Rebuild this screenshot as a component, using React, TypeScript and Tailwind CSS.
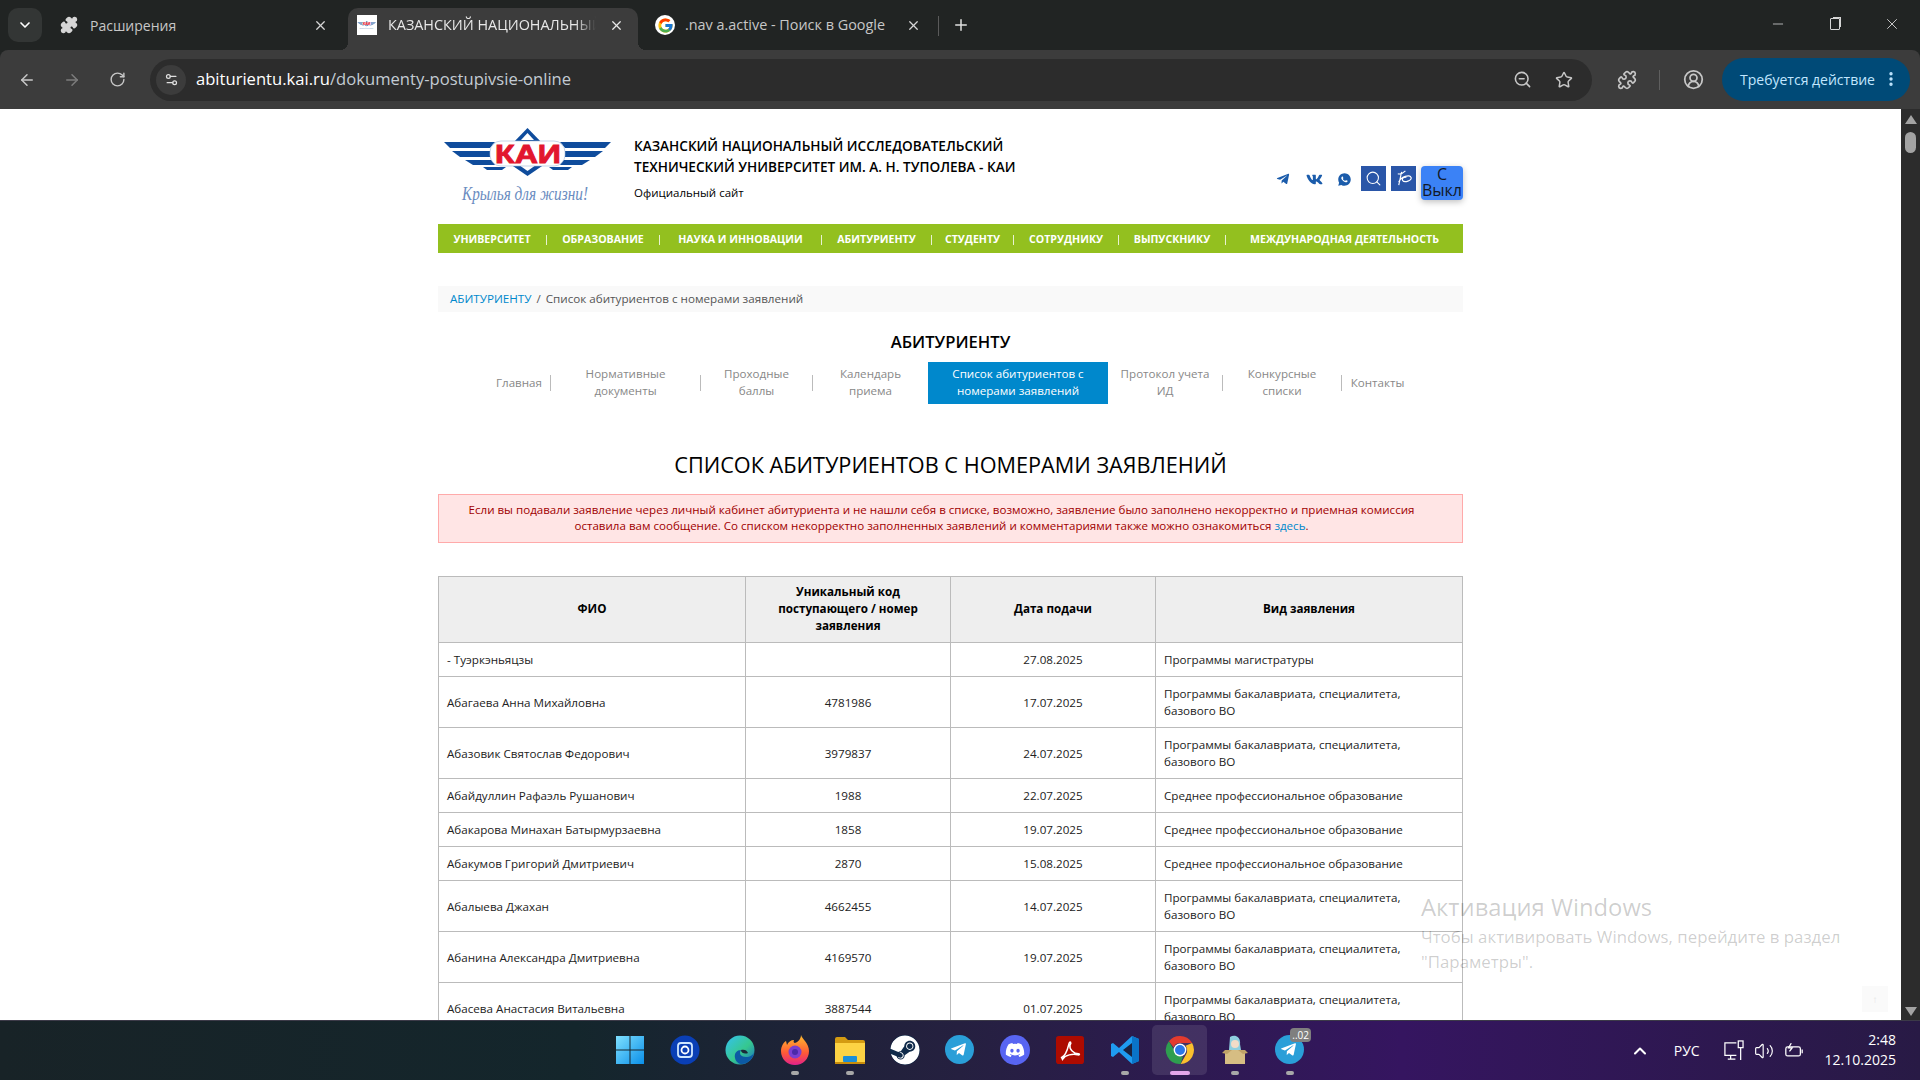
import React from 'react';
import {
  ArrowLeft,
  ArrowRight,
  ChevronDown,
  ChevronUp,
  CircleUserRound,
  EllipsisVertical,
  Minus,
  Plus,
  Puzzle,
  RotateCw,
  Search,
  Settings2,
  Star,
  Volume2,
  X,
  ZoomOut,
} from 'lucide-react';
import { FaTelegramPlane, FaVk, FaDiscord, FaSteam } from 'react-icons/fa';
import { FcGoogle } from 'react-icons/fc';
import { RiWhatsappFill } from 'react-icons/ri';

const topNav = [
  { label: 'Университет', w: 'w-[108px]' },
  { label: 'Образование', w: 'w-[112px]' },
  { label: 'Наука и инновации', w: 'w-[161px]' },
  { label: 'Абитуриенту', w: 'w-[109px]' },
  { label: 'Студенту', w: 'w-[81px]' },
  { label: 'Сотруднику', w: 'w-[104px]' },
  { label: 'Выпускнику', w: 'w-[106px]' },
  { label: 'Международная деятельность', w: 'w-[237px]' },
];

const subNav = [
  { label: 'Главная', w: 'w-[62px]', sep: true },
  { label: 'Нормативные документы', w: 'w-[149px]', sep: true, pad: 'px-[30px]' },
  { label: 'Проходные баллы', w: 'w-[111px]', sep: true, pad: 'px-[20px]' },
  { label: 'Календарь приема', w: 'w-[115px]', sep: false, pad: 'px-[20px]' },
  { label: 'Список абитуриентов с номерами заявлений', w: 'w-[180px]', sep: false, active: true },
  { label: 'Протокол учета ИД', w: 'w-[114px]', sep: true, pad: 'px-[5px]' },
  { label: 'Конкурсные списки', w: 'w-[118px]', sep: true, pad: 'px-[20px]' },
  { label: 'Контакты', w: 'w-[71px]', sep: false },
];

const BACHELOR = 'Программы бакалавриата, специалитета, базового ВО';
const COLLEGE = 'Среднее профессиональное образование';

const rows = [
  ['- Туэркэньяцзы', '', '27.08.2025', 'Программы магистратуры'],
  ['Абагаева Анна Михайловна', '4781986', '17.07.2025', BACHELOR],
  ['Абазовик Святослав Федорович', '3979837', '24.07.2025', BACHELOR],
  ['Абайдуллин Рафаэль Рушанович', '1988', '22.07.2025', COLLEGE],
  ['Абакарова Минахан Батырмурзаевна', '1858', '19.07.2025', COLLEGE],
  ['Абакумов Григорий Дмитриевич', '2870', '15.08.2025', COLLEGE],
  ['Абалыева Джахан', '4662455', '14.07.2025', BACHELOR],
  ['Абанина Александра Дмитриевна', '4169570', '19.07.2025', BACHELOR],
  ['Абасева Анастасия Витальевна', '3887544', '01.07.2025', BACHELOR],
];

const KaiLogo = ({ className }: { className?: string }) => {
  const stripes = ['4,22 55,22 50,28 10,28', '12,31 50,31 50,37 20,37', '25,40 52,40 55,45 33,45', '43,47 66,47 62,50 47,50'];
  return (
    <svg viewBox="0 0 180 90" className={className}>
      {stripes.map((p) => (
        <polygon key={p} points={p} fill="#0f4c9c" />
      ))}
      <g transform="translate(175 0) scale(-1 1)">
        {stripes.map((p) => (
          <polygon key={p} points={p} fill="#0f4c9c" />
        ))}
      </g>
      <polygon points="87.5,8 104,25 71,25" fill="#0f4c9c" />
      <polygon points="87.5,13 94,20 81,20" fill="#fff" />
      <polygon points="70,44 105,44 87.5,56" fill="#0f4c9c" />
      <polygon points="79,45 96,45 87.5,51" fill="#fff" />
      <rect x="50" y="21" width="75" height="25" rx="11" fill="#fff" stroke="#9fb8d8" strokeWidth="0.6" />
      <text
        x="55"
        y="43"
        fontFamily="Liberation Sans, sans-serif"
        fontWeight="700"
        fontSize="26"
        fill="#e2162e"
        stroke="#e2162e"
        strokeWidth="0.9"
        textLength="66"
        lengthAdjust="spacingAndGlyphs"
      >
        КАИ
      </text>
      <text
        x="22"
        y="80"
        fontFamily="Liberation Serif, serif"
        fontStyle="italic"
        fontSize="19"
        fill="#6a8cc0"
        textLength="126"
        lengthAdjust="spacingAndGlyphs"
      >
        Крылья для жизни!
      </text>
    </svg>
  );
};

const WinIcon = () => (
  <svg viewBox="0 0 30 30" className="w-[30px] h-[30px]">
    <defs>
      <linearGradient id="win" x1="0" y1="0" x2="1" y2="1">
        <stop offset="0" stopColor="#7fe0ff" />
        <stop offset="1" stopColor="#0a8fe8" />
      </linearGradient>
    </defs>
    <path d="M1 1h13.5v13.5H1zM15.5 1H29v13.5H15.5zM1 15.5h13.5V29H1zM15.5 15.5H29V29H15.5z" fill="url(#win)" />
  </svg>
);

const AssistIcon = () => (
  <svg viewBox="0 0 30 30" className="w-[30px] h-[30px]">
    <circle cx="15" cy="15" r="14.5" fill="#0a3fb5" />
    <rect x="8" y="8" width="14" height="14" rx="3" fill="none" stroke="#cfe6ff" strokeWidth="1.8" />
    <circle cx="15" cy="15" r="3.5" fill="none" stroke="#fff" strokeWidth="1.8" />
  </svg>
);

const EdgeIcon = () => (
  <svg viewBox="0 0 30 30" className="w-[30px] h-[30px]">
    <defs>
      <linearGradient id="edge" x1="0" y1="0" x2="1" y2="1">
        <stop offset="0" stopColor="#35c1f1" />
        <stop offset="0.55" stopColor="#36c88e" />
        <stop offset="1" stopColor="#1b6fc4" />
      </linearGradient>
    </defs>
    <circle cx="15" cy="15" r="14.5" fill="url(#edge)" />
    <path d="M29 16c0 4-4 6-8 6-6 0-7-4-5-7-4 0-7 3-6 8 1 4 4 6 7 6 6 0 12-6 12-13z" fill="#0c59a4" />
    <path d="M16 15c3-1 6 0 7 3-2 1-7 1-7-3z" fill="#1b2a3a" />
  </svg>
);

const FirefoxIcon = () => (
  <svg viewBox="0 0 30 30" className="w-[30px] h-[30px]">
    <defs>
      <linearGradient id="fox" x1="0" y1="0" x2="0" y2="1">
        <stop offset="0" stopColor="#ffbd2e" />
        <stop offset="0.6" stopColor="#ff5a36" />
        <stop offset="1" stopColor="#e3218b" />
      </linearGradient>
    </defs>
    <path d="M21 0c1 4 8 8 8 16 0 8-6 14-14 14S1 24 1 16c0-5 3-9 5-10l1 4c1-3 4-5 7-5-1 2 0 3 1 3 3-1 6-4 6-8z" fill="url(#fox)" />
    <circle cx="15" cy="17" r="6.5" fill="#7a3fd0" />
    <circle cx="15" cy="17" r="3" fill="#4b2aa8" />
  </svg>
);

const FolderIcon = () => (
  <svg viewBox="0 0 30 30" className="w-[30px] h-[30px]">
    <path d="M0 4a2 2 0 0 1 2-2h8l3 3h15a2 2 0 0 1 2 2v4H0z" fill="#d49b12" />
    <path d="M0 8h30v20a1 1 0 0 1-1 1H1a1 1 0 0 1-1-1z" fill="#fdd344" />
    <rect x="8" y="21" width="14" height="6" rx="1" fill="#1c8fd8" />
    <rect y="27" width="30" height="2" fill="#c98d0b" />
  </svg>
);

const SteamIcon = () => (
  <span className="flex items-center justify-center w-[30px] h-[30px] rounded-full bg-[#0f2a4a] overflow-hidden">
    <FaSteam className="w-[30px] h-[30px] text-white" />
  </span>
);

const TelegramIcon = () => (
  <span className="flex items-center justify-center w-[29px] h-[29px] rounded-full bg-[#2a9fd8]">
    <FaTelegramPlane className="w-[17px] h-[17px] text-white -ml-[2px]" />
  </span>
);

const DiscordIcon = () => (
  <span className="flex items-center justify-center w-[30px] h-[30px] rounded-full bg-[#5865f2]">
    <FaDiscord className="w-[20px] h-[20px] text-white" />
  </span>
);

const PdfIcon = () => (
  <svg viewBox="0 0 30 30" className="w-[28px] h-[28px]">
    <rect width="30" height="30" rx="3" fill="#ad0b00" />
    <path d="M6 23c3-1 6-7 8-15 1-3 3-1 1 2-1 4 4 9 9 9 2 0 1 2-1 1-5-1-13 0-16 5z" fill="none" stroke="#fff" strokeWidth="1.6" />
  </svg>
);

const CodeIcon = () => (
  <svg viewBox="0 0 30 30" className="w-[30px] h-[30px]">
    <path d="M22 1l7 3v22l-7 3L9 17 3 22l-2-1V9l2-1 6 5z" fill="#1f9cf0" />
    <path d="M22 8L13 15l9 7z" fill="#1a2340" />
    <path d="M22 1l7 3v22l-7 3z" fill="#0a74c8" />
  </svg>
);

const ChromeIcon = () => (
  <svg viewBox="0 0 30 30" className="w-[30px] h-[30px]">
    <path d="M15 1a14 14 0 0 1 12.1 7H15a7 7 0 0 0-6.4 4.2L3.9 6.3A14 14 0 0 1 15 1z" fill="#e33b2e" />
    <path d="M27.1 8A14 14 0 0 1 15.6 29l5.7-9.9A7 7 0 0 0 22 15a7 7 0 0 0-1.4-4.2z" fill="#fbc02d" />
    <path d="M3.9 6.3l5.8 10A7 7 0 0 0 18 21.3l-2.4 7.7A14 14 0 0 1 3.9 6.3z" fill="#2e9e4f" />
    <circle cx="15" cy="15" r="6.4" fill="#fff" />
    <circle cx="15" cy="15" r="5" fill="#2a76e8" />
  </svg>
);

const BoxGirlIcon = () => (
  <svg viewBox="0 0 30 30" className="w-[30px] h-[30px]">
    <path d="M10 2c5-3 11 0 10 7l1 6H9z" fill="#8fcfe0" />
    <circle cx="15" cy="9" r="4" fill="#f3dcc8" />
    <path d="M5 15h20v14H5z" fill="#d6bd83" />
    <path d="M5 15l-3 3 5 1 5-4zM25 15l3 3-5 1-5-4z" fill="#c0a268" />
  </svg>
);

const taskbarApps = [
  { icon: <WinIcon /> },
  { icon: <AssistIcon /> },
  { icon: <EdgeIcon /> },
  { icon: <FirefoxIcon />, dot: true },
  { icon: <FolderIcon />, dot: true },
  { icon: <SteamIcon /> },
  { icon: <TelegramIcon /> },
  { icon: <DiscordIcon /> },
  { icon: <PdfIcon /> },
  { icon: <CodeIcon />, dot: true },
  { icon: <ChromeIcon />, active: true },
  { icon: <BoxGirlIcon />, dot: true },
  { icon: <TelegramIcon />, dot: true, badge: '..02' },
];

const TabBar = () => (
  <div className="flex items-end h-[50px] flex-none pl-[8px] text-[14px] text-[#c7c7c7]">
    <div className="self-start mt-[8px] w-[34px] h-[34px] rounded-[10px] bg-[#333635] flex items-center justify-center flex-none">
      <ChevronDown className="w-[16px] h-[16px] text-white" strokeWidth={2.5} />
    </div>
    <div className="flex items-center h-[42px] w-[306px] pl-[18px] pr-[20px] pb-[8px] flex-none">
      <Puzzle className="w-[18px] h-[18px] text-[#d6d6d6] fill-[#d6d6d6] flex-none" />
      <span className="ml-[12px] flex-1">Расширения</span>
      <X className="w-[15px] h-[15px] text-[#d6d6d6]" />
    </div>
    <div className="relative flex items-center h-[42px] w-[290px] pl-[9px] pr-[14px] pb-[8px] bg-[#3c3c3c] rounded-t-[10px] flex-none text-[#e8e8e8]">
      <span className="absolute -left-[8px] bottom-0 w-[8px] h-[8px] bg-[radial-gradient(circle_at_0_0,transparent_8px,#3c3c3c_8px)]" />
      <span className="absolute -right-[8px] bottom-0 w-[8px] h-[8px] bg-[radial-gradient(circle_at_100%_0,transparent_8px,#3c3c3c_8px)]" />
      <span className="w-[20px] h-[20px] bg-white flex items-center justify-center flex-none">
        <KaiLogo className="w-[20px] h-[12px]" />
      </span>
      <span className="ml-[11px] w-[208px] text-[14.4px] overflow-hidden whitespace-nowrap [mask-image:linear-gradient(90deg,#000_90%,transparent)]">
        КАЗАНСКИЙ НАЦИОНАЛЬНЫЙ
      </span>
      <X className="ml-auto w-[15px] h-[15px] text-[#e8e8e8]" />
    </div>
    <div className="flex items-center h-[42px] w-[300px] pl-[17px] pr-[17px] pb-[8px] flex-none">
      <span className="w-[20px] h-[20px] rounded-full bg-white flex items-center justify-center flex-none">
        <FcGoogle className="w-[17px] h-[17px]" />
      </span>
      <span className="ml-[10px] flex-1 text-[14.4px] whitespace-nowrap">.nav a.active - Поиск в Google</span>
      <X className="w-[15px] h-[15px] text-[#d6d6d6]" />
    </div>
    <div className="self-center w-px h-[20px] bg-[#5a5a5a] mt-[1px] flex-none" />
    <Plus className="self-center ml-[13px] w-[18px] h-[18px] text-[#e0e0e0]" />
    <div className="ml-auto self-start flex items-center h-[48px]">
      <div className="w-[57px] flex justify-center"><Minus className="w-[16px] h-[16px] text-[#d6d6d6]" strokeWidth={1.2} /></div>
      <div className="w-[57px] flex justify-center">
        <div className="w-[10px] h-[12px] border border-[#d6d6d6] rounded-[1px] shadow-[2px_-2px_0_-1px_#d6d6d6]" />
      </div>
      <div className="w-[57px] flex justify-center"><X className="w-[18px] h-[18px] text-[#d6d6d6]" strokeWidth={1.2} /></div>
    </div>
  </div>
);

const Toolbar = () => (
  <div className="flex items-center h-[59px] flex-none bg-[#3c3c3c] rounded-t-[8px] text-[#c7c7c7]">
    <div className="flex items-center w-[150px] flex-none pl-[18px] gap-[27px]">
      <ArrowLeft className="w-[18px] h-[18px]" />
      <ArrowRight className="w-[18px] h-[18px] text-[#7c7c7c]" />
      <RotateCw className="w-[17px] h-[17px] ml-[1px]" />
    </div>
    <div className="flex items-center h-[42px] w-[1442px] flex-none rounded-full bg-[#2c2c2c] pl-[6px] pr-[19px]">
      <span className="w-[30px] h-[30px] rounded-full bg-[#3c3c3c] flex items-center justify-center flex-none">
        <Settings2 className="w-[15px] h-[15px] text-[#e0e0e0]" />
      </span>
      <span className="ml-[10px] text-[16.6px] whitespace-nowrap text-[#c3cbd3]">
        <span className="text-white">abiturientu.kai.ru</span>/dokumenty-postupivsie-online
      </span>
      <ZoomOut className="ml-auto w-[19px] h-[19px]" />
      <Star className="ml-[23px] w-[18px] h-[18px]" />
    </div>
    <Puzzle className="ml-[25px] w-[20px] h-[20px] flex-none" />
    <div className="ml-[22px] w-px h-[20px] bg-[#5f5f5f] flex-none" />
    <CircleUserRound className="ml-[23px] w-[21px] h-[21px] flex-none" />
    <div className="ml-[18px] flex items-center h-[43px] w-[188px] flex-none rounded-full bg-[#004a77] pl-[18px] pb-[1px] text-[14px] text-[#c2e7ff]">
      <span className="whitespace-nowrap">Требуется действие</span>
      <EllipsisVertical className="ml-[7px] w-[18px] h-[18px]" strokeWidth={2.5} />
    </div>
  </div>
);

const SiteHeader = () => (
  <div className="flex items-start h-[115px]">
    <KaiLogo className="w-[180px] h-[90px] mt-[11px] ml-[2px] flex-none" />
    <div className="ml-[14px] mt-[26px] text-black">
      <div className="text-[13.6px] leading-[21px] font-semibold">
        КАЗАНСКИЙ НАЦИОНАЛЬНЫЙ ИССЛЕДОВАТЕЛЬСКИЙ
        <br />
        ТЕХНИЧЕСКИЙ УНИВЕРСИТЕТ ИМ. А. Н. ТУПОЛЕВА - КАИ
      </div>
      <div className="mt-[7px] text-[11.5px] leading-[18px]">Официальный сайт</div>
    </div>
    <div className="ml-auto mt-[57px] flex items-start">
      <div className="flex items-center h-[26px] text-[#1b5cab] mr-[7px]">
        <FaTelegramPlane className="w-[14px] h-[14px] mr-[16px]" />
        <FaVk className="w-[17px] h-[17px] mr-[14px]" />
        <RiWhatsappFill className="w-[15px] h-[15px] mr-[2px]" />
      </div>
      <div className="w-[25px] h-[25px] bg-[#2a56a8] flex items-center justify-center">
        <Search className="w-[17px] h-[17px] text-white" strokeWidth={1.5} />
      </div>
      <div className="ml-[5px] w-[25px] h-[25px] bg-[#2a56a8] flex items-center justify-center">
        <svg viewBox="0 0 20 20" className="w-[19px] h-[19px]" fill="none" stroke="#fff" strokeWidth="1.2">
          <path d="M4 5c3 1 6-1 8-3M8 3L5 17M5 14C7 8 17 5 18 9c1 3-7 6-9 3-1-2 2-4 4-3" />
        </svg>
      </div>
      <div className="ml-[5px] w-[42px] h-[34px] rounded-[4px] bg-[#3b82f6] shadow-[0_2px_6px_rgba(0,0,0,0.25)] text-center text-[16px] leading-[16px] text-[#111827]">
        С Выкл
      </div>
    </div>
  </div>
);

const App = () => (
  <div className="relative h-screen w-full overflow-hidden flex flex-col bg-[#212423] font-['Open_Sans',sans-serif]">
    <TabBar />
    <Toolbar />
    <div className="flex flex-1 min-h-0">
      <div className="flex-1 min-w-0 bg-white overflow-hidden">
        <div className="w-[1025px] mx-auto">
          <SiteHeader />

          <nav className="flex items-center h-[29px] pt-[2px] bg-[#93c01f]">
            {topNav.map((item, i) => (
              <React.Fragment key={item.label}>
                <a className={`${item.w} flex-none text-center text-[10.6px] font-bold uppercase text-white whitespace-nowrap`}>
                  {item.label}
                </a>
                {i < topNav.length - 1 && <span className="w-px h-[10px] bg-white/80 flex-none" />}
              </React.Fragment>
            ))}
          </nav>

          <div className="mt-[33px] h-[26px] flex items-center bg-[#f9f9f9] pl-[12px] text-[11.65px] text-[#555]">
            <a className="text-[#0088cc]">АБИТУРИЕНТУ</a>
            <span className="mx-[5px]">/</span>
            <span>Список абитуриентов с номерами заявлений</span>
          </div>

          <h2 className="mt-[10px] h-[40px] flex items-center justify-center text-[16.6px] font-semibold text-black">
            АБИТУРИЕНТУ
          </h2>

          <div className="flex items-center justify-center h-[42px] text-[11.6px] leading-[17px] text-[#888]">
            {subNav.map((item) => (
              <React.Fragment key={item.label}>
                <a
                  className={`${item.w} ${item.pad ?? ''} flex-none text-center ${
                    item.active
                      ? 'flex items-center justify-center h-[42px] pb-[2px] bg-[#0088cc] text-white px-[20px]'
                      : '-mt-[2px]'
                  }`}
                >
                  {item.label}
                </a>
                {item.sep && <span className="w-px h-[16px] bg-[#bbb] flex-none" />}
              </React.Fragment>
            ))}
          </div>

          <h1 className="pt-[42px] pb-[11px] text-center text-[21.7px] leading-[37px] font-normal uppercase text-black">
            Список абитуриентов с номерами заявлений
          </h1>

          <div className="h-[49px] flex items-center justify-center border border-[#ffaaaa] bg-[#ffe5e5] pl-[15px] pr-[33px] pb-[2px] text-center text-[11.57px] leading-[16px] text-[#a00000]">
            <p>
              Если вы подавали заявление через личный кабинет абитуриента и не нашли себя в списке, возможно, заявление было заполнено некорректно и приемная комиссия оставила вам сообщение. Со списком некорректно заполненных заявлений и комментариями также можно ознакомиться{' '}
              <a className="text-[#0088cc]">здесь</a>.
            </p>
          </div>

          <table className="mt-[33px] w-full table-fixed border-collapse text-[11.65px] leading-[17px] text-[#222]">
            <colgroup>
              <col className="w-[307px]" />
              <col className="w-[205px]" />
              <col className="w-[205px]" />
              <col className="w-[307px]" />
            </colgroup>
            <thead>
              <tr className="bg-[#eeeeee] text-black">
                <th className="border border-[#bbb] px-[8px] pt-[6px] pb-[8px] font-bold">ФИО</th>
                <th className="border border-[#bbb] px-[24px] pt-[6px] pb-[8px] font-bold">
                  Уникальный код поступающего / номер заявления
                </th>
                <th className="border border-[#bbb] px-[8px] pt-[6px] pb-[8px] font-bold">Дата подачи</th>
                <th className="border border-[#bbb] px-[8px] pt-[6px] pb-[8px] font-bold">Вид заявления</th>
              </tr>
            </thead>
            <tbody>
              {rows.map((row) => (
                <tr key={row[0]}>
                  <td className="border border-[#bbb] px-[8px] py-[8px]">{row[0]}</td>
                  <td className="border border-[#bbb] px-[8px] py-[8px] text-center">{row[1]}</td>
                  <td className="border border-[#bbb] px-[8px] py-[8px] text-center">{row[2]}</td>
                  <td className="border border-[#bbb] pl-[8px] pr-[40px] py-[8px]">{row[3]}</td>
                </tr>
              ))}
            </tbody>
          </table>
        </div>
      </div>

      <div className="w-[19px] flex-none bg-[#2c2c2c] flex flex-col items-center">
        <div className="mt-[6px] w-0 h-0 border-x-[6px] border-x-transparent border-b-[9px] border-b-[#a3a3a3]" />
        <div className="mt-[8px] w-[11px] h-[21px] rounded-full bg-[#a3a3a3]" />
        <div className="mt-auto mb-[4px] w-0 h-0 border-x-[6px] border-x-transparent border-t-[9px] border-t-[#a3a3a3]" />
      </div>
    </div>

    <div className="flex items-center h-[60px] flex-none bg-[linear-gradient(90deg,#182327_0%,#14262c_30%,#252040_50%,#351560_73%,#281a45_100%)] border-t border-[#3c3a48] text-white">
      <div className="ml-[602px] -mt-[2px] flex">
        {taskbarApps.map((app, i) => (
          <div
            key={i}
            className={`relative w-[55px] h-[50px] flex items-center justify-center rounded-[5px] ${app.active ? 'bg-white/10' : ''}`}
          >
            {app.icon}
            {app.dot && <span className="absolute bottom-[0px] w-[8px] h-[4px] rounded-full bg-[#a8a8a8]" />}
            {app.active && <span className="absolute bottom-[0px] w-[20px] h-[4px] rounded-full bg-[#e3a6ea]" />}
            {app.badge && (
              <span className="absolute top-[3px] right-[6px] px-[2px] rounded-[4px] bg-[#7f7f7f] text-[10px] leading-[14px] text-white">
                {app.badge}
              </span>
            )}
          </div>
        ))}
      </div>
      <ChevronUp className="ml-auto w-[20px] h-[20px]" strokeWidth={2.5} />
      <span className="ml-[24px] text-[14px]">РУС</span>
      <svg viewBox="0 0 22 22" className="ml-[23px] w-[21px] h-[21px]" fill="none" stroke="#fff" strokeWidth="1.3">
        <path d="M14 3H2v13h12M5 20h8M8 16v4" />
        <rect x="16" y="1" width="5" height="7" />
        <path d="M18.5 8v13" />
      </svg>
      <Volume2 className="ml-[10px] w-[20px] h-[20px]" strokeWidth={1.4} />
      <svg viewBox="0 0 22 16" className="ml-[10px] w-[20px] h-[15px]" fill="none" stroke="#fff" strokeWidth="1.4">
        <rect x="2" y="4" width="16" height="10" rx="2" />
        <path d="M20 7v4" />
        <path d="M8 0L5 5h4L6 9" />
      </svg>
      <div className="ml-[21px] mr-[24px] -mt-[1px] flex flex-col items-end text-[14px] leading-[20px]">
        <span>2:48</span>
        <span>12.10.2025</span>
      </div>
    </div>

    {/* поверх страницы */}
    <div className="absolute left-[1421px] top-[889px] text-[#000]/20 pointer-events-none">
      <div className="text-[23.8px] leading-[37px]">Активация Windows</div>
      <div className="-mt-[2px] text-[16.85px] leading-[25px]">
        Чтобы активировать Windows, перейдите в раздел
        <br />
        "Параметры".
      </div>
    </div>
    <div className="absolute left-[1862px] top-[986px] w-[26px] h-[26px] bg-[#fafafa] flex items-center justify-center text-[10px] text-[#e5e5e5]">
      ↑
    </div>
  </div>
);

export default App;
